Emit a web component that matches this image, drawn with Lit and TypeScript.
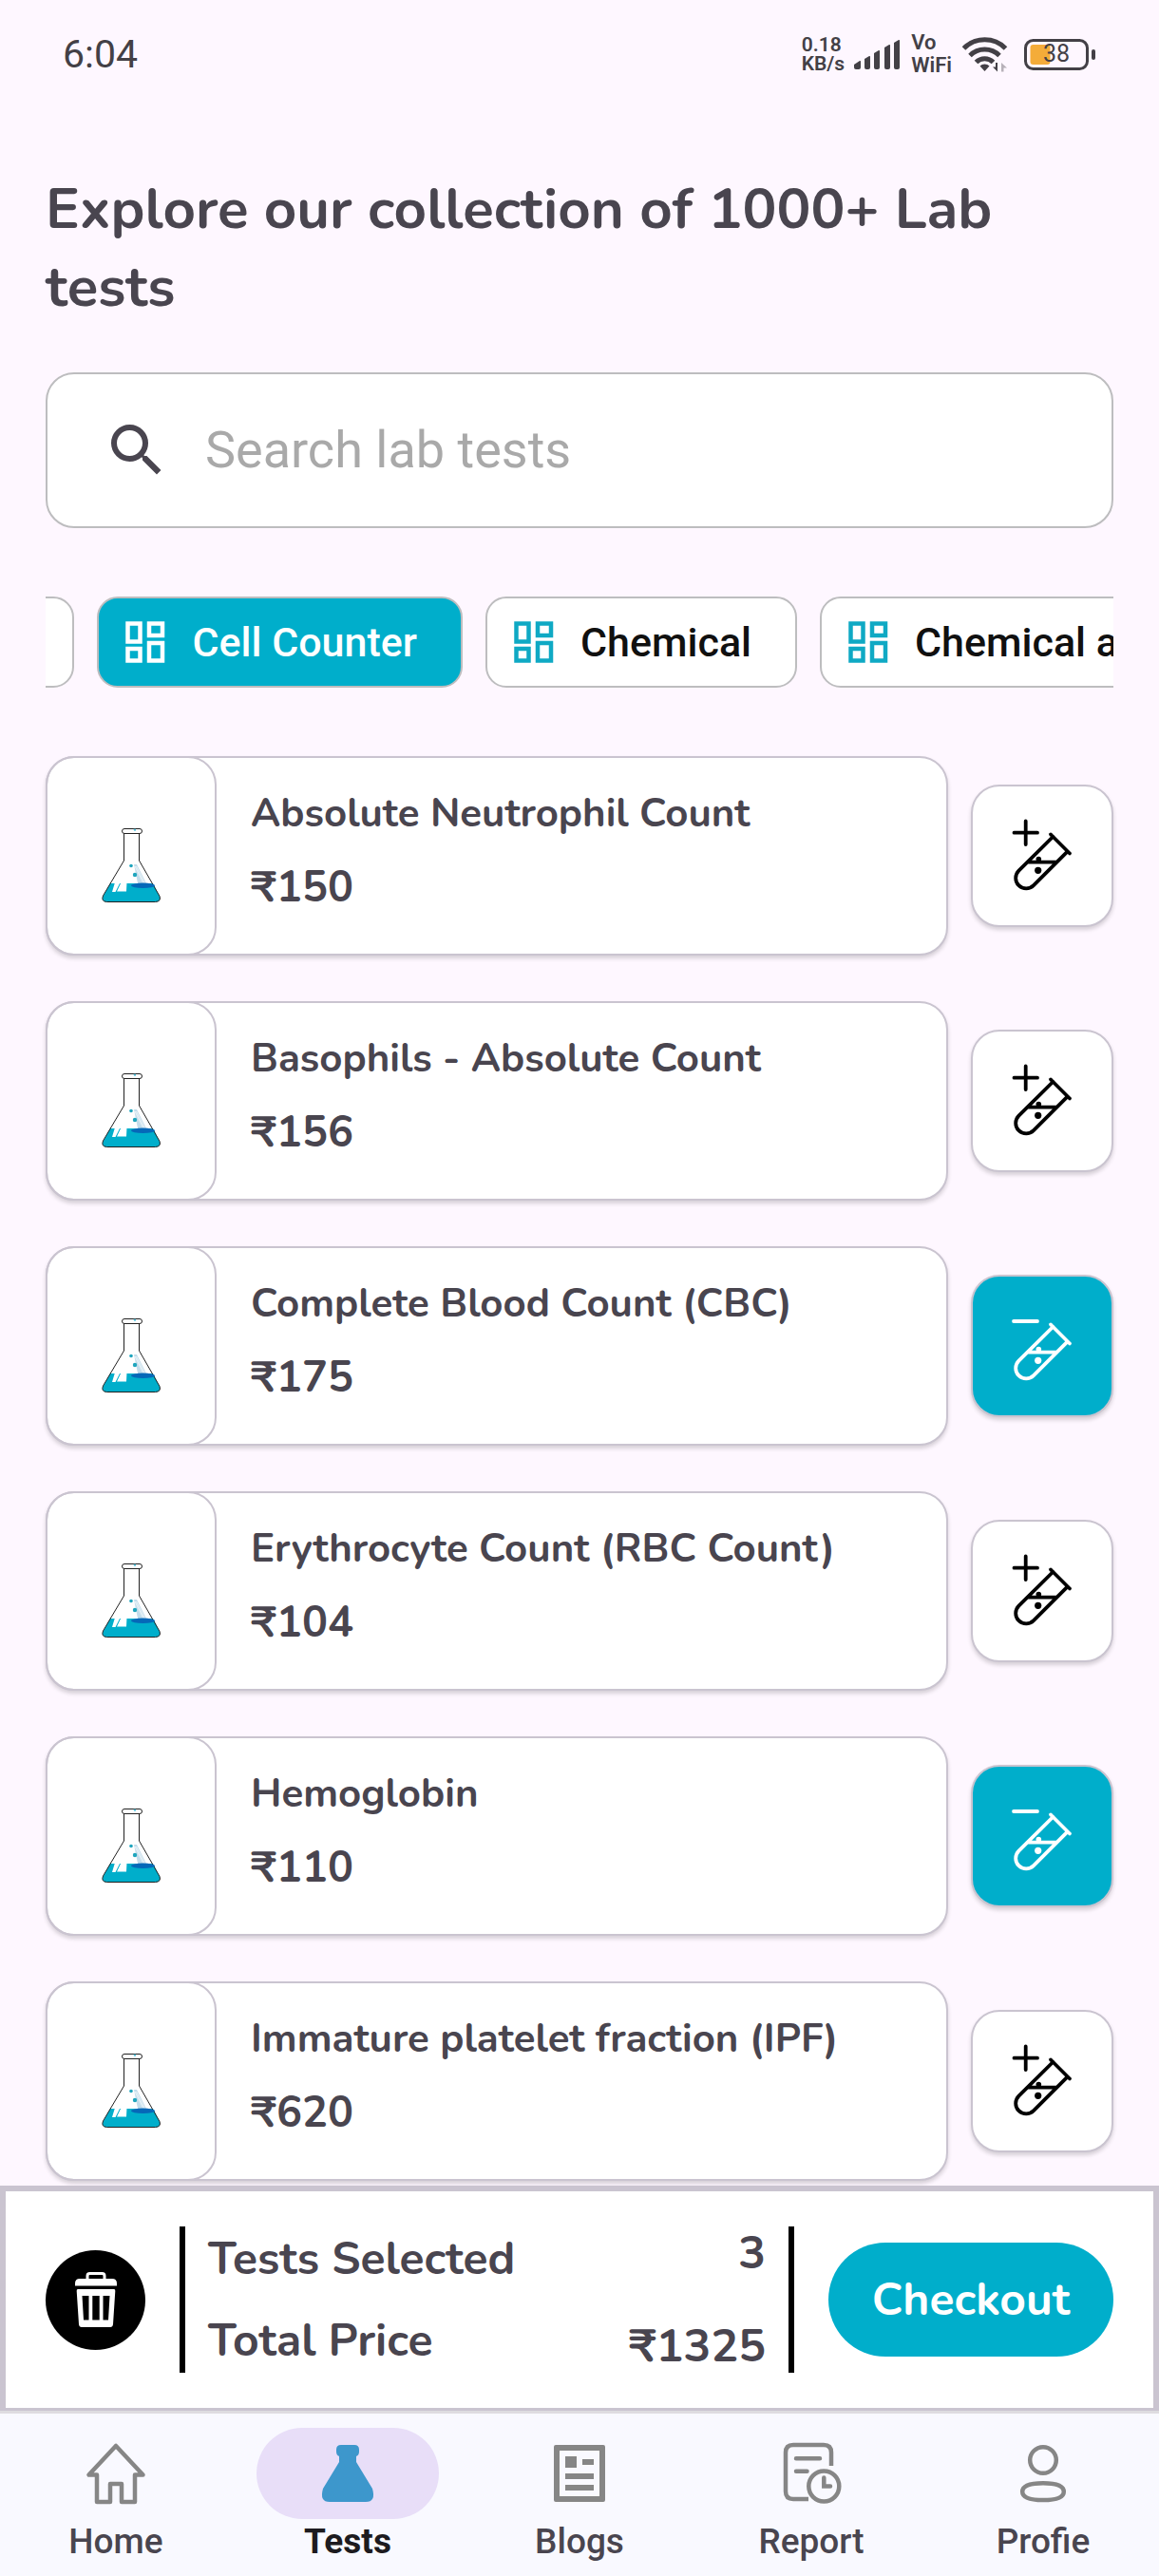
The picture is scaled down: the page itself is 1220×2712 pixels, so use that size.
import { LitElement, html, css, svg } from "lit";
import { customElement, property, state, query } from "lit/decorators.js";
import { classMap } from "lit/directives/class-map.js";

interface LabTest {
  name: string;
  price: number;
}

const CATEGORIES = ["All", "Cell Counter", "Chemical", "Chemical analyser"];

const TESTS: LabTest[] = [
  { name: "Absolute Neutrophil Count", price: 150 },
  { name: "Basophils - Absolute Count", price: 156 },
  { name: "Complete Blood Count (CBC)", price: 175 },
  { name: "Erythrocyte Count (RBC Count)", price: 104 },
  { name: "Hemoglobin", price: 110 },
  { name: "Immature platelet fraction (IPF)", price: 620 },
];

const shared = css`
  * {
    box-sizing: border-box;
  }
  svg {
    display: block;
    flex: none;
  }
  button {
    font: inherit;
    color: inherit;
    margin: 0;
    padding: 0;
    border: 0;
    background: none;
    cursor: pointer;
  }
`;

@customElement("status-bar")
export class StatusBar extends LitElement {
  static styles = [
    shared,
    css`
      :host {
        display: flex;
        align-items: center;
        justify-content: space-between;
        height: 116px;
        padding: 0 66px 2px;
        color: #434046;
        font-family: Roboto, sans-serif;
      }
      .time {
        font-size: 41px;
        line-height: 48px;
      }
      .tray {
        display: flex;
        align-items: center;
        gap: 10px;
      }
      .pair {
        font-size: 21px;
        line-height: 20px;
        font-weight: 600;
      }
      .calling {
        font-size: 22px;
        line-height: 24px;
        font-weight: 600;
      }
      .battery {
        display: grid;
        align-items: center;
        margin-left: 6px;
      }
      .battery > * {
        grid-area: 1 / 1;
      }
      .level {
        width: 68px;
        text-align: center;
        font-size: 25px;
        line-height: 32px;
      }
    `,
  ];

  render() {
    return html`
      <span class="time">6:04</span>
      <div class="tray">
        <div class="pair">0.18<br />KB/s</div>
        <svg width="50" height="32" viewBox="0 0 50 32" fill="currentColor" aria-hidden="true">
          <path d="M0 27l6-4q1-.4 1 1v6q0 2-2 2H2q-2 0-2-2z" />
          <path d="M11 21l5-3q1-.4 1 1v11q0 2-2 2h-2q-2 0-2-2z" />
          <path d="M21 15l5-3q1-.4 1 1v17q0 2-2 2h-2q-2 0-2-2z" />
          <path d="M32 9l5-3q1-.4 1 1v23q0 2-2 2h-2q-2 0-2-2z" />
          <path d="M42 4l5-3q1-.4 1 1v28q0 2-2 2h-2q-2 0-2-2z" />
        </svg>
        <div class="calling">Vo<br />WiFi</div>
        <svg width="50" height="38" viewBox="0 0 50 38" fill="none" aria-hidden="true">
          <g stroke="currentColor" stroke-width="5">
            <path d="M2.500 13a31 31 0 0 1 44 0" />
            <path d="M9 20.500a22 22 0 0 1 31 0" />
            <path d="M15.500 27.500a12.500 12.500 0 0 1 18 0" />
          </g>
          <path d="M24.500 37l-5-5.500a7 7 0 0 1 10 0z" fill="currentColor" />
          <path d="M38 28v9.500l-5-5h3V28z" fill="currentColor" />
          <path d="M42 37.500V28l6 5.500h-3.500v4z" fill="#b7b1b9" />
        </svg>
        <div class="battery">
          <svg width="76" height="33" viewBox="0 0 76 33" aria-hidden="true">
            <rect x="6.500" y="6" width="21" height="21" rx="3" fill="#f4ac39" />
            <rect x="1.500" y="1.500" width="65" height="30" rx="8" fill="none" stroke="currentColor" stroke-width="3" />
            <rect x="71" y="11" width="4" height="11" rx="2" fill="currentColor" />
          </svg>
          <span class="level">38</span>
        </div>
      </div>
    `;
  }
}

@customElement("category-chips")
export class CategoryChips extends LitElement {
  @state() private active = "Cell Counter";
  @query(".row") private row!: HTMLElement;
  @query(".active") private activeChip!: HTMLElement;

  static styles = [
    shared,
    css`
      :host {
        display: block;
      }
      .row {
        position: relative;
        display: flex;
        gap: 24px;
        overflow-x: auto;
        scrollbar-width: none;
      }
      .chip {
        flex: none;
        display: flex;
        align-items: center;
        gap: 27px;
        height: 96px;
        padding: 0 46px 0 27px;
        border: 2px solid #bdbdbf;
        border-radius: 22px;
        background: #fff;
        color: #101010;
        font: 500 43px/48px Roboto, sans-serif;
        white-space: nowrap;
      }
      .chip svg {
        color: #0fa9c4;
      }
      .chip.active,
      .chip.active svg {
        color: #fff;
      }
      .chip.active {
        background: #00aecb;
      }
    `,
  ];

  /** Keeps the tail of the preceding chip in view as a hint that the row scrolls. */
  firstUpdated() {
    this.row.scrollLeft = this.activeChip.offsetLeft - 54;
  }

  render() {
    return html`
      <div class="row">
        ${CATEGORIES.map(
          (name) => html`
            <button
              class=${classMap({ chip: true, active: name === this.active })}
              aria-pressed=${name === this.active}
              @click=${() => (this.active = name)}
            >
              <svg width="44" height="44" viewBox="0 0 44 44" fill="none" stroke="currentColor" stroke-width="4.500" aria-hidden="true">
                <rect x="3.500" y="2.500" width="13" height="19" />
                <rect x="26" y="2.500" width="14" height="12.500" />
                <rect x="3.500" y="29" width="13" height="12.500" />
                <rect x="26" y="23" width="14" height="18.500" />
              </svg>
              ${name}
            </button>
          `,
        )}
      </div>
    `;
  }
}

@customElement("test-row")
export class TestRow extends LitElement {
  @property({ attribute: false }) test!: LabTest;
  @property({ type: Boolean }) selected = false;

  static styles = [
    shared,
    css`
      :host {
        display: flex;
        align-items: center;
        gap: 24px;
      }
      .card {
        flex: 1;
        display: flex;
        height: 210px;
        border: 2px solid #cac4d0;
        border-radius: 30px;
        background: #fff;
        box-shadow: 0 3px 4px rgba(0, 0, 0, 0.16);
      }
      .thumb {
        display: grid;
        place-items: center;
        width: 180px;
        margin: -2px 0 -2px -2px;
        border: 2px solid #cac4d0;
        border-radius: 30px;
      }
      .info {
        flex: 1;
        padding: 31px 36px 0;
        color: #49454f;
        font-family: Nunito, "Open Sans", sans-serif;
      }
      .name,
      .price {
        margin: 0;
        font-weight: 700;
      }
      .name {
        font-size: 42px;
        line-height: 56px;
      }
      .price {
        margin-top: 20px;
        font-size: 45px;
        line-height: 60px;
      }
      .toggle {
        display: grid;
        place-items: center;
        width: 150px;
        height: 150px;
        border: 2px solid #cac4d0;
        border-radius: 30px;
        background: #fff;
        color: #000;
        box-shadow: 0 3px 4px rgba(0, 0, 0, 0.16);
      }
      .toggle.on {
        background: #00aecb;
        color: #fff;
      }
    `,
  ];

  private flask() {
    return html`
      <svg width="62" height="98" viewBox="0 -20 62 98" aria-hidden="true">
        <path d="M9 58h45l7 13.500q1.500 5.500-4 6H5.500q-6-.5-4-6z" fill="#00aecb" />
        <path d="M23.500 5.500V34L1.500 71q-2.500 6 4 6.500h51q6.500-.5 4.500-6L39.500 34V5.500" fill="none" stroke="#222" stroke-width="1" />
        <rect x="21.500" y=".5" width="21" height="5" rx="2.500" fill="#fff" stroke="#222" stroke-width="1" />
        <path d="M33.500 .8h2.500v2h-2z" fill="#5cc3dc" />
        <path d="M14 57h5.500l-5 10h-3.500zM20.500 57h6l-.5 9.500H16z" fill="#fff" />
        <path d="M34 38l3 0 10 20h-9z" fill="#c3dcea" />
        <path d="M35 40l9 18M36.500 40l9 18" stroke="#fff" stroke-width=".7" />
        <ellipse cx="43.500" cy="60.300" rx="12.500" ry="2.700" fill="#0568b8" />
        <circle cx="31" cy="39.500" r="1.800" fill="#1ea5bd" />
        <circle cx="35" cy="49" r="2.200" fill="#1ea5bd" />
      </svg>
    `;
  }

  render() {
    const sign = this.selected
      ? svg`<path d="M12 16H37" />`
      : svg`<path d="M12.500 17.700H37M24.700 5.500V30" />`;
    return html`
      <article class="card">
        <div class="thumb">${this.flask()}</div>
        <div class="info">
          <h2 class="name">${this.test.name}</h2>
          <p class="price">₹${this.test.price}</p>
        </div>
      </article>
      <button
        class=${classMap({ toggle: true, on: this.selected })}
        aria-label=${(this.selected ? "Remove " : "Add ") + this.test.name}
        @click=${() => this.dispatchEvent(new CustomEvent("toggle-test"))}
      >
        <svg width="84" height="84" viewBox="0 0 84 84" fill="none" stroke="currentColor" stroke-width="3.800" stroke-linecap="round" aria-hidden="true">
          ${sign}
          <path d="M51 19.500L71 39.500" />
          <path d="M53.300 22L17.400 57.600A11 11 0 0 0 33 73.200L68.500 37.700M27 48.700H57" />
          <g fill="currentColor" stroke="none">
            <circle cx="38.300" cy="45.500" r="2.800" />
            <circle cx="37.700" cy="57.300" r="3.600" />
          </g>
        </svg>
      </button>
    `;
  }
}

@customElement("cart-bar")
export class CartBar extends LitElement {
  @property({ type: Number }) count = 0;
  @property({ type: Number }) total = 0;

  static styles = [
    shared,
    css`
      :host {
        display: flex;
        align-items: center;
        height: 237px;
        padding: 0 42px;
        border: 6px solid #cac4d0;
        border-bottom-width: 3px;
        background: #fff;
        color: #49454f;
        font: 700 48px/66px Nunito, "Open Sans", sans-serif;
      }
      .clear {
        display: grid;
        place-items: center;
        width: 105px;
        height: 105px;
        border-radius: 50%;
        background: #000;
        color: #fff;
      }
      .rule {
        width: 6px;
        height: 154px;
        background: #000;
      }
      .clear + .rule {
        margin: 0 24px 0 36px;
      }
      .labels,
      .values {
        display: grid;
        gap: 20px;
      }
      .labels {
        flex: 1;
      }
      .values {
        gap: 32px;
        text-align: right;
      }
      .values + .rule {
        margin: 0 36px 0 24px;
      }
      .checkout {
        width: 300px;
        height: 120px;
        border-radius: 60px;
        background: #00aecb;
        color: #fff;
      }
    `,
  ];

  render() {
    return html`
      <button class="clear" aria-label="Clear selected tests">
        <svg width="44" height="58" viewBox="0 0 44 58" aria-hidden="true">
          <path d="M13 8V4q0-2.500 2.500-2.500h13Q31 1.500 31 4v4" fill="none" stroke="currentColor" stroke-width="3" />
          <path d="M0 14.500V12q0-5 5-5h34q5 0 5 5v2.500z" fill="currentColor" />
          <path
            fill="currentColor"
            fill-rule="evenodd"
            d="M3 18h38q1.500 0 1.300 2L40 55q-.3 3-3 3H7q-2.700 0-3-3L1.700 20Q1.500 18 3 18zM7.500 25l1.500 25.500h5.500V25zM18.300 25v25.500h7.400V25zM29.500 25v25.500H35L36.500 25z"
          />
        </svg>
      </button>
      <div class="rule"></div>
      <div class="labels">
        <span>Tests Selected</span>
        <span>Total Price</span>
      </div>
      <div class="values">
        <span>${this.count}</span>
        <span>₹${this.total}</span>
      </div>
      <div class="rule"></div>
      <button class="checkout">Checkout</button>
    `;
  }
}

const NAV = [
  {
    label: "Home",
    icon: svg`<path d="M36 7L7.500 37.500H16V66H30V47H42V66H56V37.500H64.500z" fill="none" stroke="#868686" stroke-width="4.500" stroke-linejoin="round" />`,
  },
  {
    label: "Tests",
    icon: svg`<path d="M29 6h14q5 0 5 5v2q0 4-3 5v6l17 28q4 14-7 14H17Q6 66 10 52l17-28v-6q-3-1-3-5v-2q0-5 5-5z" fill="#3d97cc" />`,
  },
  {
    label: "Blogs",
    icon: svg`<g fill="#868686"><path fill-rule="evenodd" d="M11 6h50q2 0 2 2v56q0 2-2 2H11q-2 0-2-2V8q0-2 2-2zM15 12v48h42V12z" /><path d="M21 18h12v12H21zM39 21h12v6H39zM21 36h30v6H21zM21 48h30v6H21z" /></g>`,
  },
  {
    label: "Report",
    icon: svg`<g fill="none" stroke="#868686" stroke-width="4.500"><path d="M57 28V14q0-8-8-8H17q-8 0-8 8V55q0 8 8 8H33" /><path d="M20 20.300H45M20 33.700H31.500" stroke-linecap="round" /><circle cx="49.300" cy="49.500" r="16" /><path d="M49.300 40.500V49.500H56" stroke-linecap="round" /></g>`,
  },
  {
    label: "Profie",
    icon: svg`<g fill="none" stroke="#868686" stroke-width="4.500"><circle cx="36" cy="22" r="13.800" /><path d="M36 46.200c13 0 21.800 2 21.800 9s-9 8.800-21.800 8.800-21.800-1.800-21.800-8.800 8.800-9 21.800-9z" /></g>`,
  },
];

@customElement("bottom-nav")
export class BottomNav extends LitElement {
  static styles = [
    shared,
    css`
      :host {
        display: block;
        border-top: 3px solid #dedce0;
        background: #f9f9ff;
      }
      .nav {
        display: grid;
        grid-template-columns: repeat(5, 1fr);
        padding: 15px 0;
      }
      .item {
        display: flex;
        flex-direction: column;
        align-items: center;
        gap: 2px;
        color: #49454f;
        font: 500 37px/43px Roboto, sans-serif;
        text-decoration: none;
      }
      .pill {
        display: grid;
        place-items: center;
        width: 192px;
        height: 96px;
        border-radius: 48px;
      }
      .current {
        color: #1d1b20;
        font-weight: 700;
      }
      .current .pill {
        background: #e8def8;
      }
    `,
  ];

  render() {
    return html`
      <nav class="nav">
        ${NAV.map(
          ({ label, icon }) => html`
            <a class=${classMap({ item: true, current: label === "Tests" })} href="#${label.toLowerCase()}">
              <span class="pill">
                <svg width="72" height="72" viewBox="0 0 72 72" aria-hidden="true">${icon}</svg>
              </span>
              ${label}
            </a>
          `,
        )}
      </nav>
    `;
  }
}

@customElement("app-root")
export class AppRoot extends LitElement {
  @state() private selected = new Set(["Complete Blood Count (CBC)", "Hemoglobin"]);
  @state() private count = 3;
  @state() private total = 1325;

  static styles = [
    shared,
    css`
      :host {
        display: flex;
        flex-direction: column;
        height: 100vh;
        background: #fef7ff;
        color: #49454f;
      }
      .title {
        margin: 63px 48px 0;
        font: 700 60px/82px Nunito, "Open Sans", sans-serif;
      }
      .search {
        display: flex;
        align-items: center;
        gap: 36px;
        height: 164px;
        margin: 49px 48px 72px;
        padding: 0 58px;
        border: 2px solid #bdbdbf;
        border-radius: 30px;
        background: #fff;
      }
      .search input {
        flex: 1;
        min-width: 0;
        padding: 0;
        border: 0;
        outline: 0;
        background: none;
        color: #49454f;
        font: 400 54px/64px Roboto, sans-serif;
      }
      .search input::placeholder {
        color: #a9a9a9;
        opacity: 1;
      }
      .chips {
        margin: 0 48px;
      }
      .list {
        flex: 1 1 0;
        min-height: 0;
        display: flex;
        flex-direction: column;
        gap: 48px;
        margin-top: 60px;
        padding: 12px 48px 0;
        overflow-y: auto;
        scrollbar-width: none;
      }
    `,
  ];

  private toggle(test: LabTest) {
    const next = new Set(this.selected);
    const adding = !next.delete(test.name);
    if (adding) next.add(test.name);
    this.selected = next;
    this.count += adding ? 1 : -1;
    this.total += adding ? test.price : -test.price;
  }

  render() {
    return html`
      <status-bar></status-bar>
      <h1 class="title">Explore our collection of 1000+ Lab tests</h1>
      <label class="search">
        <svg width="72" height="72" viewBox="0 0 24 24" fill="currentColor" aria-hidden="true">
          <path
            d="M15.500 14h-.79l-.28-.27A6.471 6.471 0 0 0 16 9.500 6.500 6.500 0 1 0 9.500 16c1.610 0 3.090-.59 4.230-1.570l.27.28v.79l5 4.990L20.490 19l-4.990-5zm-6 0C7.010 14 5 11.990 5 9.500S7.010 5 9.500 5 14 7.010 14 9.500 11.990 14 9.500 14z"
          />
        </svg>
        <input type="search" placeholder="Search lab tests" aria-label="Search lab tests" />
      </label>
      <category-chips class="chips"></category-chips>
      <main class="list">
        ${TESTS.map(
          (test) => html`
            <test-row
              .test=${test}
              ?selected=${this.selected.has(test.name)}
              @toggle-test=${() => this.toggle(test)}
            ></test-row>
          `,
        )}
      </main>
      <cart-bar .count=${this.count} .total=${this.total}></cart-bar>
      <bottom-nav></bottom-nav>
    `;
  }
}
